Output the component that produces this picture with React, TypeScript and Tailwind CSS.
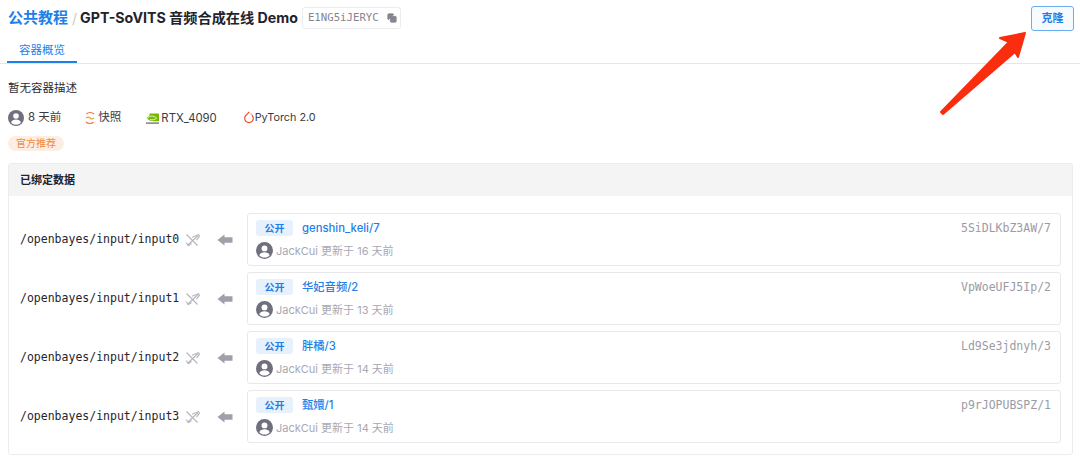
import { Copy } from "lucide-react";

const SANS = "font-['Inter','Noto_Sans_CJK_SC',sans-serif]";
const MONO = "font-['DejaVu_Sans_Mono','Noto_Sans_CJK_SC',monospace]";

const ROWS = [
  { path: "/openbayes/input/input0", name: "genshin_keli/7", id: "5SiDLKbZ3AW/7", ago: "16" },
  { path: "/openbayes/input/input1", name: "华妃音频/2", id: "VpWoeUFJ5Ip/2", ago: "13" },
  { path: "/openbayes/input/input2", name: "胖橘/3", id: "Ld9Se3jdnyh/3", ago: "14" },
  { path: "/openbayes/input/input3", name: "甄嬛/1", id: "p9rJOPUBSPZ/1", ago: "14" },
];

function Avatar({ size }: { size: number }) {
  return (
    <svg width={size} height={size} viewBox="0 0 24 24" className="shrink-0">
      <circle cx="12" cy="12" r="12" fill="#6f6f7d" />
      <circle cx="12" cy="9" r="4.2" fill="#fff" />
      <path d="M4.6 18.6c1.2-3 4.2-4.2 7.4-4.2s6.2 1.2 7.4 4.2C17.6 20.6 15 22 12 22s-5.6-1.4-7.4-3.4z" fill="#fff" />
    </svg>
  );
}

function UnlinkIcon() {
  return (
    <svg width="16" height="14" viewBox="0 0 16 14" fill="none" stroke="#b4b4bd" strokeWidth="1.1" className="shrink-0">
      <path d="M1.5 1.5l11 11" />
      <path d="M2.5 12.5L13 2.5" />
      <path d="M7 4.2l6.5-2.6 1 1.6-3 4" />
      <path d="M1 9.5l2.5 3 3-2" />
    </svg>
  );
}

function ArrowLeft() {
  return (
    <svg width="16" height="12" viewBox="0 0 16 12" className="shrink-0">
      <path d="M0.5 6L7.5 0.5V3.2h8v5.6h-8v2.7z" fill="#a0a0ab" />
    </svg>
  );
}

function Row({ path, name, id, ago }: (typeof ROWS)[number]) {
  return (
    <div className="flex items-center">
      <div className={`${MONO} mt-[1px] w-[160px] text-[11.5px] text-[#25252d]`}>{path}</div>
      <div className="ml-[5px] w-[22px]">
        <UnlinkIcon />
      </div>
      <div className="ml-[10px] w-[30px]">
        <ArrowLeft />
      </div>
      <div className="flex h-[53px] flex-1 flex-col rounded-[3px] border border-[#e8e8ec] pl-[8px] pr-[9px] pt-[6px]">
        <div className="flex h-[16px] items-center">
          <span className="flex h-[16px] w-[37px] items-center justify-center rounded-[3px] bg-[#e6f1fd] text-[10px] font-semibold text-[#1f7fe8]">
            公开
          </span>
          <span className="ml-[9px] text-[11.3px] font-medium text-[#1f7fe8]">{name}</span>
          <span className={`${MONO} ml-auto mt-[1px] text-[11.5px] text-[#9b9ba5]`}>{id}</span>
        </div>
        <div className="mt-[6px] flex items-center gap-[3px] text-[11px] text-[#a8a8b2]">
          <Avatar size={17} />
          <span className="mt-[1px]">JackCui 更新于 {ago} 天前</span>
        </div>
      </div>
    </div>
  );
}

export default function App() {
  return (
    <div className={`${SANS} relative h-[460px] w-[1080px] overflow-hidden bg-white`}>
      <div className="flex h-[64px] flex-col border-b border-[#e6e6ea]">
        <div className="flex h-[36px] items-center justify-between pl-[8px] pr-[6px]">
          <div className="flex items-center">
            <span className="text-[15px] font-semibold text-[#1f7fe8]">公共教程</span>
            <span className="ml-[4px] mr-[3px] text-[14px] text-[#c9c9d0]">/</span>
            <span className="text-[14.2px] font-bold text-[#22222a]">GPT-SoVITS 音频合成在线 Demo</span>
            <div className="ml-[4px] flex h-[22px] w-[99px] items-center gap-[8px] rounded-[3px] border border-[#ececf0] pl-[5px]">
              <span className={`${MONO} text-[10.7px] text-[#85858f]`}>E1NG5iJERYC</span>
              <Copy size={10} color="#85858f" fill="#85858f" />
            </div>
          </div>
          <button className="h-[25px] w-[43px] rounded-[3px] border border-[#6aaef2] bg-[#f7fbff] text-[11px] font-semibold text-[#1f7fe8]">
            克隆
          </button>
        </div>
        <div className="flex flex-1">
          <div className="ml-[7px] flex w-[70px] items-end justify-center border-b-2 border-[#1f7fe8] pb-[2px] text-[11.5px] text-[#1f7fe8]">
            容器概览
          </div>
        </div>
      </div>

      <div className="px-[8px]">
        <div className="mt-[17px] text-[11.5px] leading-[14px] text-[#2a2a32]">暂无容器描述</div>
        <div className="mt-[15px] flex h-[16px] items-center text-[11.5px] text-[#3a3a44]">
          <Avatar size={16} />
          <span className="ml-[4px]">8 天前</span>
          <svg width="10" height="14" viewBox="0 0 10 14" fill="none" stroke="#f0743e" strokeWidth="1.2" className="ml-[24px]">
            <path d="M9 3C7 1 3 1 1.5 3.2" />
            <path d="M1 7c1.5-1 3-1 4 0s2.5 1 4 0" stroke="#e8a33d" />
            <path d="M1 11c2 2 6 2 7.5-.2" />
          </svg>
          <span className="ml-[3px]">快照</span>
          <svg width="13" height="11" viewBox="0 0 13 11" className="ml-[25px]">
            <path d="M3.5 0.5H13V8.2H7.5L3.5 7.6L0.8 5L3.5 2.4z" fill="#76b900" />
            <path d="M1.8 5C4 2.6 7.6 2.2 10.6 5.2C8.6 7 6 7.4 4 6.2" fill="none" stroke="#fff" strokeWidth=".8" />
            <rect x="0" y="9.4" width="13" height="1.4" fill="#777" />
          </svg>
          <span className="ml-[2px] text-[11.3px]">RTX_4090</span>
          <svg width="12" height="14" viewBox="0 0 12 14" fill="none" stroke="#ee4c2c" strokeWidth="1.2" className="ml-[26px]">
            <path d="M6.2 1L3 4.3a4.3 4.3 0 1 0 6 0" />
            <circle cx="8.2" cy="3.2" r=".6" fill="#ee4c2c" stroke="none" />
          </svg>
          <span className="text-[10.8px]">PyTorch 2.0</span>
        </div>
        <div className="mt-[10px] flex h-[15px] w-[56px] items-center justify-center rounded-full bg-[#fdeee3] text-[10px] text-[#ef8a45]">
          官方推荐
        </div>

        <div className="mt-[12px] h-[292px] w-[1065px] rounded-[3px] border border-[#ececf0]">
          <div className="flex h-[32px] items-center bg-[#f4f4f5] pl-[11px] text-[11px] font-semibold text-[#22222a]">
            已绑定数据
          </div>
          <div className="flex flex-col gap-[6px] px-[11px] pt-[17px]">
            {ROWS.map((r) => (
              <Row key={r.path} {...r} />
            ))}
          </div>
        </div>
      </div>

      {/* red annotation arrow */}
      <svg width="100" height="92" viewBox="0 0 100 92" className="absolute left-[935px] top-[28px]">
        <path
          d="M6 84L74 14L65 10L90 5L83 29L80 24L8 86Z"
          fill="#fa2d0f"
          stroke="#fa2d0f"
          strokeWidth="2"
          strokeLinejoin="round"
        />
      </svg>
    </div>
  );
}
